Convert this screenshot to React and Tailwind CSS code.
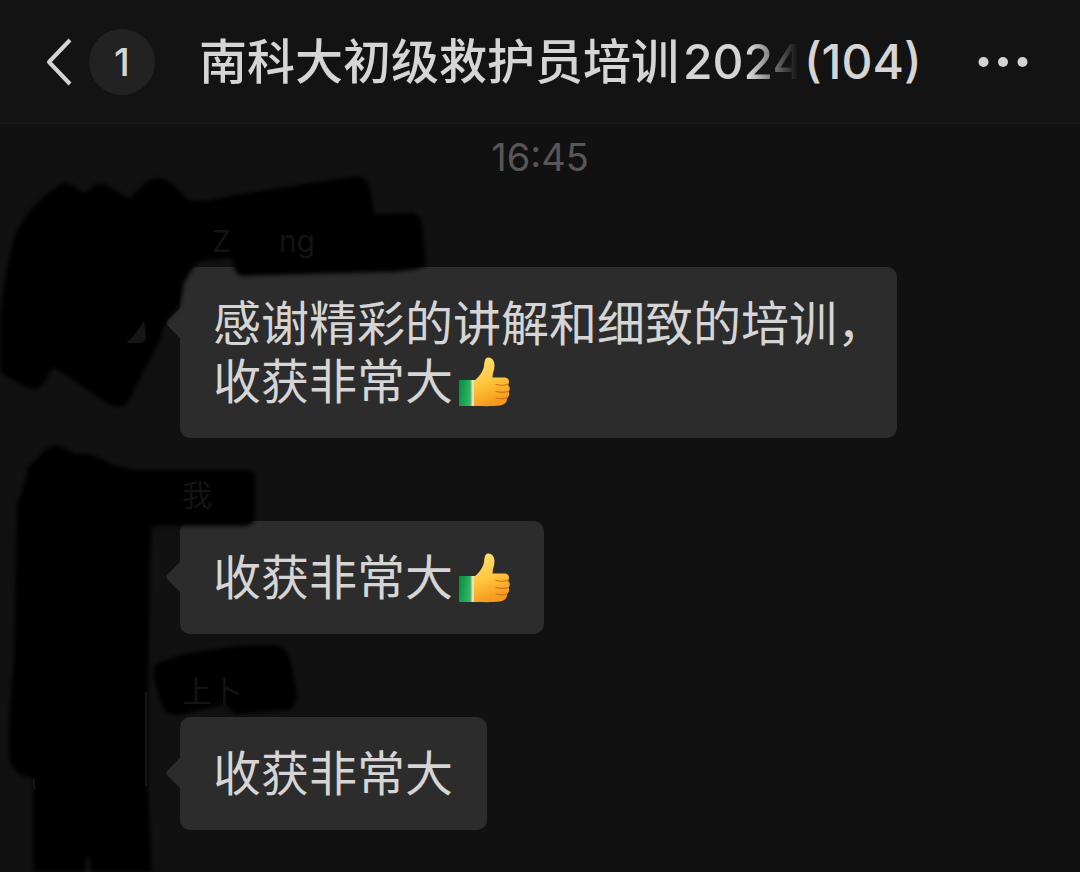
import React from 'react';

const messages = [
  { id: 1, name: ['Z', 'ng'], indent: 'ml-8', lines: ['感谢精彩的讲解和细致的培训，', '收获非常大'], thumb: true, width: 'w-[717px]' },
  { id: 2, name: ['我'], indent: 'ml-0.5', lines: ['收获非常大'], thumb: true, width: 'w-auto' },
  { id: 3, name: ['上卜'], indent: 'ml-0.5', lines: ['收获非常大'], thumb: false, width: 'w-auto' },
];

const ThumbsUp = () => (
  <svg viewBox="0 0 57 58" className="inline-block w-[57px] h-[58px] align-top" role="img" aria-label="赞">
    <defs>
      <linearGradient id="hand" x1="0" y1="0" x2="0.3" y2="1">
        <stop offset="0" stopColor="#ffe07a" />
        <stop offset="0.55" stopColor="#ffc83f" />
        <stop offset="1" stopColor="#f79a1c" />
      </linearGradient>
      <linearGradient id="cuff" x1="0" y1="0" x2="1" y2="0.3">
        <stop offset="0" stopColor="#078a3c" />
        <stop offset="1" stopColor="#2fb768" />
      </linearGradient>
    </defs>
    <path d="M6 27 H18 V53 H6 Z" fill="url(#cuff)" />
    <path d="M17 27 H22 V53 H17 Z" fill="#d9e8c4" />
    <path d="M17 27 H18.500 V53 H17 Z" fill="#58b46f" />
    <path
      d="M21 28 C26 24 30 19 31 13 C31.500 9 31.500 5 35 4.500 C39 4 41.500 8 41.500 12 C41.500 17 39.500 20 39.500 24.500 H51 C54.500 24.500 56 26.500 56 28.500 C56 30 55.500 31 55 32 C57 33.500 57.500 36.500 55.500 38.500 C57 41 56 44 54 45 C54.500 49 51.500 52 47 52.500 C39 53.500 29 53 21 53 Z"
      fill="url(#hand)"
    />
    <path
      d="M43 31.500 C47 32.500 51 32.500 55 31.500 M43 38.500 C47 39.500 52 39.500 55.500 38.500 M43 45 C47 46 51 46 54 45"
      fill="none"
      stroke="#c9761a"
      strokeWidth="1.2"
      strokeLinecap="round"
    />
  </svg>
);

const Header = () => (
  <header className="flex items-center h-[124px] px-11 pt-0.5 bg-[#131313] border-b-2 border-[#191919]">
    <button type="button" aria-label="返回" className="flex items-center gap-4 shrink-0">
      <svg viewBox="0 0 29 50" className="w-[29px] h-[50px]" fill="none" stroke="#d3d3d3" strokeWidth="4">
        <path d="M26 3 L5 25 L26 47" strokeLinejoin="round" />
      </svg>
      <span className="flex items-center justify-center w-[66px] h-[66px] rounded-full bg-[#222222] text-[38px] font-medium">
        1
      </span>
    </button>
    <h1 className="flex flex-1 min-w-0 ml-11 text-[48px] leading-[58px] font-medium whitespace-nowrap">
      {/* long names fade out before the member count */}
      <span className="flex gap-1 [mask-image:linear-gradient(to_right,#000_91%,transparent_99%)]">
        <span>南科大初级救护员培训</span>
        <span>2024</span>
      </span>
      <span>(104)</span>
    </h1>
    <button type="button" aria-label="更多" className="shrink-0 px-2">
      <svg viewBox="0 0 50 12" className="w-[50px] h-3" fill="#d3d3d3">
        <circle cx="5.500" cy="6" r="5" />
        <circle cx="25" cy="6" r="5" />
        <circle cx="44.500" cy="6" r="5" />
      </svg>
    </button>
  </header>
);

const Message = ({ name, indent, lines, thumb, width }) => (
  <li className="flex flex-col items-start">
    <div className={`relative z-10 flex gap-12 h-9 mb-2 text-[30px] leading-9 text-[#131313] ${indent}`}>
      {name.map((part) => (
        <span key={part}>{part}</span>
      ))}
    </div>
    <div
      className={`relative pl-[33px] pr-[34px] pt-7 pb-[27px] rounded-[10px] bg-[#2c2c2c] text-[48px] leading-[58px] whitespace-nowrap ${width}`}
    >
      <svg viewBox="0 0 14 30" className="absolute right-full top-[41px] w-[14px] h-[30px]" fill="#2c2c2c">
        <path d="M14 0 L1 13 Q0 15 1 17 L14 30 Z" />
      </svg>
      {lines.map((line, i) => (
        <p key={line}>
          {line}
          {thumb && i === lines.length - 1 && <ThumbsUp />}
        </p>
      ))}
    </div>
  </li>
);

// Black marker strokes that hide avatars and nicknames
const MarkerStrokes = () => (
  <svg
    viewBox="0 124 440 748"
    className="absolute left-0 top-0 w-[440px] h-[748px] pointer-events-none"
    aria-hidden="true"
  >
    <defs>
      <filter id="soft" x="-10%" y="-10%" width="120%" height="120%">
        <feGaussianBlur stdDeviation="2" />
      </filter>
    </defs>
    <g filter="url(#soft)" fill="#000">
      <path d="M14 240 C20 218 40 198 58 186 Q66 180 74 186 L84 193 L95 185 Q103 182 110 187 L129 199 L146 182 Q158 174 170 182 L190 201 Q210 202 240 194 L352 177 Q367 174 370 188 L374 214 L410 213 Q421 213 422 224 L426 266 Q410 272 380 272 L242 276 Q234 275 232 258 L200 261 Q192 268 184 283 L180 305 L167 320 Q163 328 160 340 L128 402 Q120 412 105 402 L55 368 Q50 368 46 380 Q38 394 24 386 L0 372 V315 Q6 265 14 240 Z" />
      <path d="M28 466 Q36 462 44 450 Q56 442 68 450 L76 454 Q94 452 110 464 L136 470 H248 Q256 471 255 480 V518 Q253 526 244 526 H152 L150 560 L148 700 V790 L152 872 H92 L88 852 L84 872 H33 V778 Q12 776 9 756 Q8 720 14 660 L17 504 Q24 490 28 466 Z" />
      <path d="M156 664 Q184 652 210 650 Q245 644 276 645 Q290 648 292 668 L297 694 Q296 710 286 710 L234 714 L226 704 L184 714 Q168 718 162 706 L154 680 Q152 670 156 664 Z" />
    </g>
    <path d="M144 320 Q136 335 126 343 H140 Q146 343 146 336 Z" fill="#151515" />
    <path d="M34 778 Q33 784 35 789 M146 692 V786" stroke="#1d1d1d" strokeWidth="1.5" fill="none" />
  </svg>
);

const App = () => {
  return (
    <div className="min-h-screen bg-[#111111] text-[#d5d5d5] font-[Inter,'Noto_Sans_CJK_SC',sans-serif]">
      <Header />
      <main className="relative pt-2">
        <time className="block text-center text-[38px] leading-[50px] text-[#575757]">16:45</time>
        <ul className="flex flex-col gap-[39px] pt-[41px] pl-[180px] pr-6 pb-10">
          {messages.map((msg) => (
            <Message key={msg.id} {...msg} />
          ))}
        </ul>
        <MarkerStrokes />
      </main>
    </div>
  );
};

export default App;
